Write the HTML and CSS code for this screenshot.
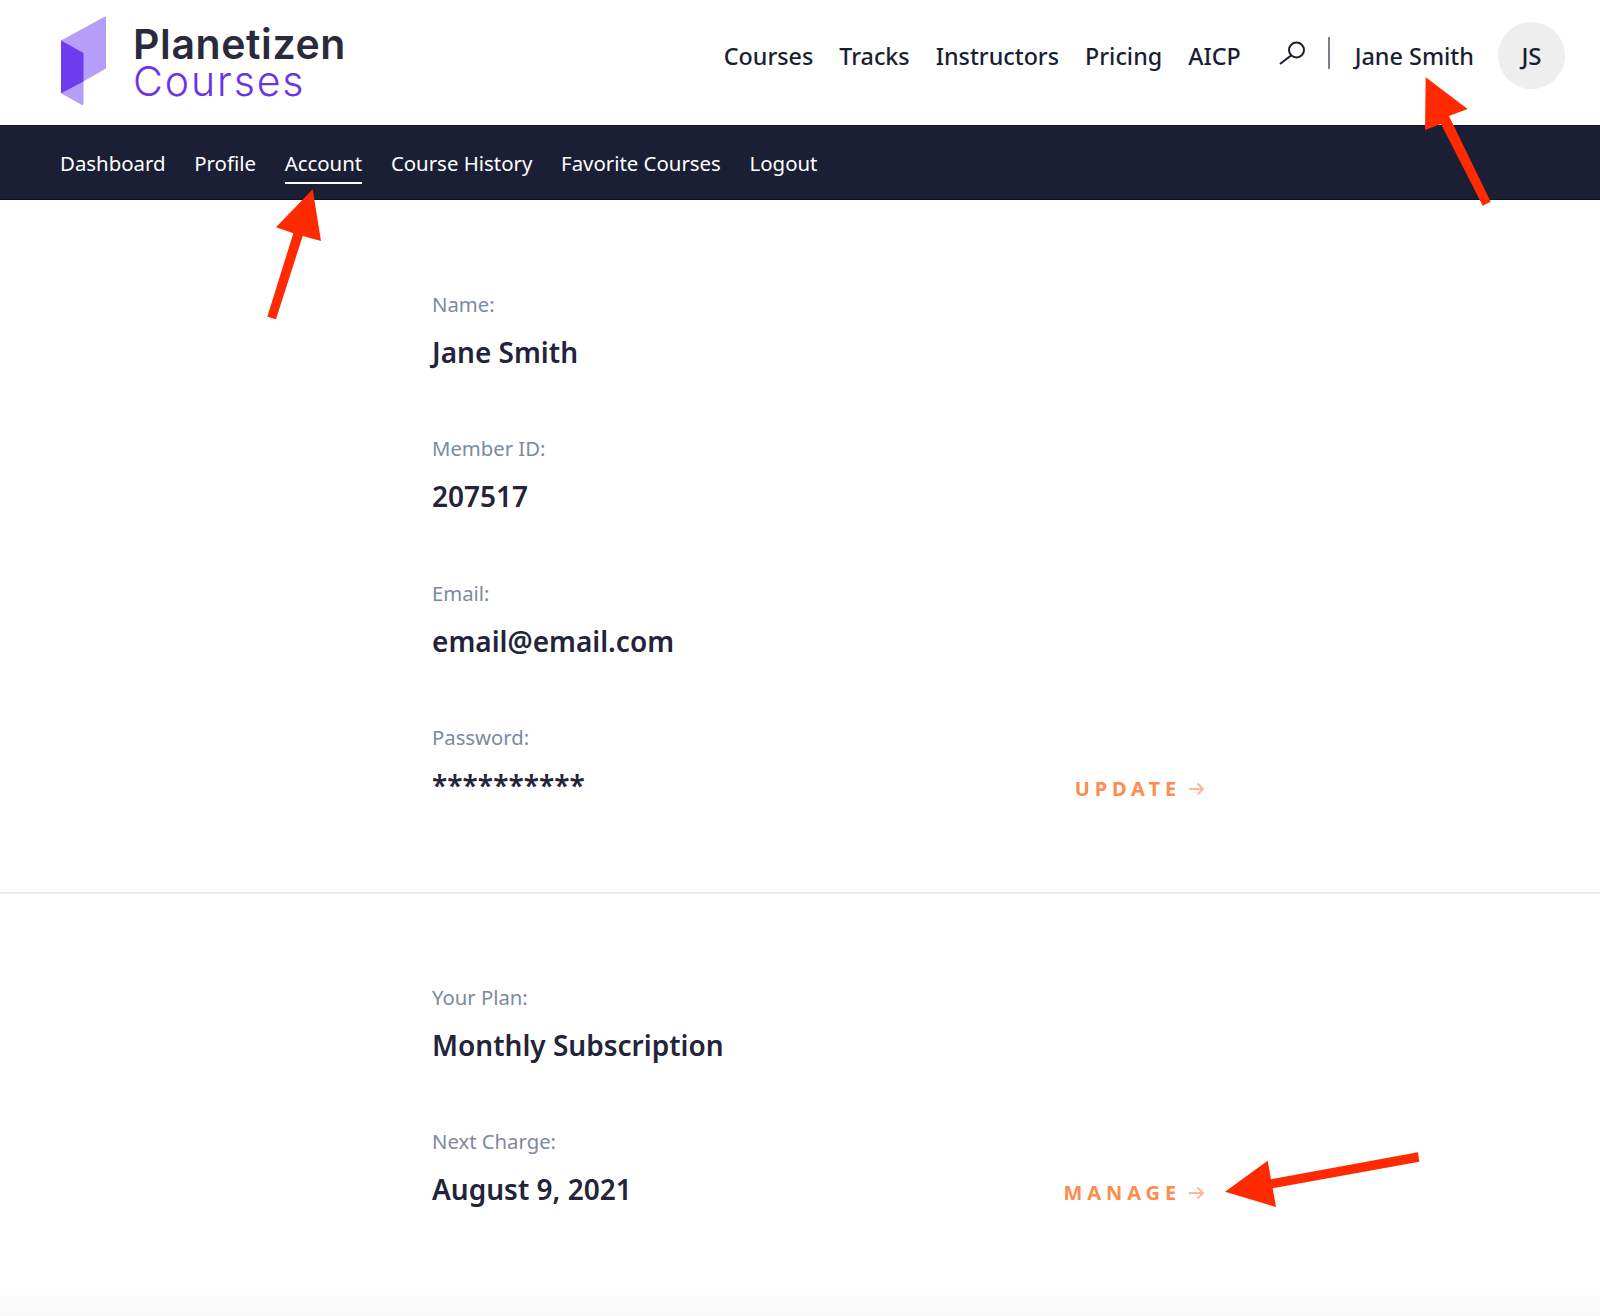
FILE: index.html
```html
<!DOCTYPE html>
<html lang="en">
<head>
<meta charset="utf-8">
<title>Planetizen Courses - Account</title>
<link rel="stylesheet" href="styles.css">
</head>
<body>
<header class="topbar">
  <a class="logo" href="#">
    <svg class="logo-mark" width="48" height="92" viewBox="0 0 48 92">
      <path class="mark-light" d="M1 25.500 45 1.500C45.700 1.200 46 1.500 46 2.300V53.500L23.500 66.500V88.500C23.500 90 22.800 90.400 21.500 89.700L1 78.200Z"/>
      <path class="mark-dark" d="M1 25.500 23.500 38V66.500L1 78.200Z"/>
    </svg>
    <span class="logo-text">
      <span class="logo-top">Planetizen</span>
      <span class="logo-bottom">Courses</span>
    </span>
  </a>
  <nav class="mainnav">
    <a href="#">Courses</a>
    <a href="#">Tracks</a>
    <a href="#">Instructors</a>
    <a href="#">Pricing</a>
    <a href="#">AICP</a>
  </nav>
  <div class="usernav">
    <svg class="search" width="30" height="26" viewBox="0 0 30 26">
      <circle cx="19.500" cy="10" r="7.500"/>
      <path d="M14 15.500 3 24"/>
    </svg>
    <span class="vline"></span>
    <a class="username" href="#">Jane Smith</a>
    <span class="avatar">JS</span>
  </div>
</header>

<nav class="subnav">
  <a href="#">Dashboard</a>
  <a href="#">Profile</a>
  <a class="active" href="#">Account</a>
  <a href="#">Course History</a>
  <a href="#">Favorite Courses</a>
  <a href="#">Logout</a>
</nav>

<main>
  <section class="panel panel-account">
    <div class="field">
      <div class="label">Name:</div>
      <div class="value">Jane Smith</div>
    </div>
    <div class="field">
      <div class="label">Member ID:</div>
      <div class="value">207517</div>
    </div>
    <div class="field">
      <div class="label">Email:</div>
      <div class="value">email@email.com</div>
    </div>
    <div class="field">
      <div class="label">Password:</div>
      <div class="value-row">
        <div class="value">**********</div>
        <a class="action" href="#">UPDATE
          <svg width="15" height="14" viewBox="0 0 15 14"><path d="M0 7H14M8.500 1.500 14 7 8.500 12.500"/></svg>
        </a>
      </div>
    </div>
  </section>
  <section class="panel panel-plan">
    <div class="field">
      <div class="label">Your Plan:</div>
      <div class="value">Monthly Subscription</div>
    </div>
    <div class="field">
      <div class="label">Next Charge:</div>
      <div class="value-row">
        <div class="value">August 9, 2021</div>
        <a class="action" href="#">MANAGE
          <svg width="15" height="14" viewBox="0 0 15 14"><path d="M0 7H14M8.500 1.500 14 7 8.500 12.500"/></svg>
        </a>
      </div>
    </div>
  </section>
</main>
<div class="footer-fade"></div>

<svg class="annotations" width="1600" height="1316" viewBox="0 0 1600 1316">
  <polygon points="1425.700,77.300 1467.700,109 1449,116 1490.700,201.700 1482.700,205.700 1441,124 1425,130"/>
  <polygon points="312.700,189.300 321,241 302.700,236 276,319.300 267.300,316.700 293.300,233.300 276,227.300"/>
  <polygon points="1225,1191.700 1267.700,1160.700 1271,1179.300 1418,1152.300 1419.300,1161.700 1272.700,1188.300 1276,1207"/>
</svg>
</body>
</html>
```
FILE: styles.css
```css
* { box-sizing: border-box; }
html, body { margin: 0; padding: 0; }
body {
  position: relative;
  width: 1600px;
  height: 1316px;
  overflow: hidden;
  background: #fff;
  font-family: "Noto Sans", "Open Sans", sans-serif;
  color: #1f2035;
}
a { color: inherit; text-decoration: none; }

.topbar {
  height: 125px;
  display: flex;
  align-items: center;
  padding: 0 35px 14px 60px;
}
.logo { display: flex; align-items: flex-start; height: 111px; padding-top: 15px; }
.logo-mark { display: block; flex: none; }
.mark-light { fill: #b59ef8; }
.mark-dark { fill: #6d3cee; }
.logo-text {
  display: flex;
  flex-direction: column;
  margin: 10px 0 0 25px;
  font-family: "Inter", sans-serif;
}
.logo-top { font-size: 41px; line-height: 38px; font-weight: 600; letter-spacing: 0.6px; color: #2a2a3c; }
.logo-bottom { font-size: 41px; line-height: 37px; font-weight: 300; letter-spacing: 1.9px; color: #6a35ea; }

.mainnav {
  display: flex;
  gap: 26px;
  margin-left: auto;
  font-size: 23.300px;
  font-weight: 500;
  color: #1a1e33;
}
.usernav { display: flex; align-items: center; margin-left: 36px; }
.search { display: block; margin-bottom: 5px; }
.search circle, .search path { fill: none; stroke: #1a1e33; stroke-width: 2; }
.vline { width: 2px; height: 32px; margin: 0 25px 6px 21px; background: #7b8090; }
.username { font-size: 23.400px; font-weight: 500; color: #1a1e33; }
.avatar {
  width: 67px;
  height: 67px;
  margin-left: 24px;
  display: flex;
  align-items: center;
  justify-content: center;
  border-radius: 50%;
  background: #eeeeee;
  font-size: 24px;
  font-weight: 500;
  color: #1a1e33;
}

.subnav {
  height: 75px;
  display: flex;
  gap: 28.700px;
  padding-left: 60px;
  background: #1b1f35;
  color: #fff;
  font-size: 20.400px;
  border-top: 1px solid #11131f;
  border-bottom: 1px solid #11131f;
}
.subnav a {
  display: flex;
  align-items: center;
  height: 58px;
  padding-top: 17px;
  border-bottom: 2px solid transparent;
}
.subnav a.active { border-bottom-color: #fff; }

.panel { padding: 89px 394px 0 432px; width: 100%; }
.panel-account { height: 692px; }
.panel-plan { padding-top: 88px; border-top: 2px solid #e9ebee; }
.field { height: 144.400px; }
.label { font-size: 20.300px; line-height: 30px; color: #7c8aa0; }
.value { font-size: 28px; line-height: 40px; font-weight: 600; color: #23233a; margin-top: 13px; }
.value-row { display: flex; justify-content: space-between; align-items: flex-start; }
.action {
  display: flex;
  align-items: center;
  gap: 8px;
  margin-top: 23px;
  padding-right: 2px;
  font-size: 20px;
  line-height: 28px;
  font-weight: 700;
  letter-spacing: 4.900px;
  color: #ff8c4d;
}
.action svg { display: block; }
.action path { fill: none; stroke: #ffb795; stroke-width: 2; }

.footer-fade {
  position: absolute;
  left: 0;
  right: 0;
  bottom: 0;
  height: 30px;
  background: linear-gradient(#fff, #f8f8f9);
}
.annotations { position: absolute; left: 0; top: 0; pointer-events: none; }
.annotations polygon { fill: #ff2a00; }
```
